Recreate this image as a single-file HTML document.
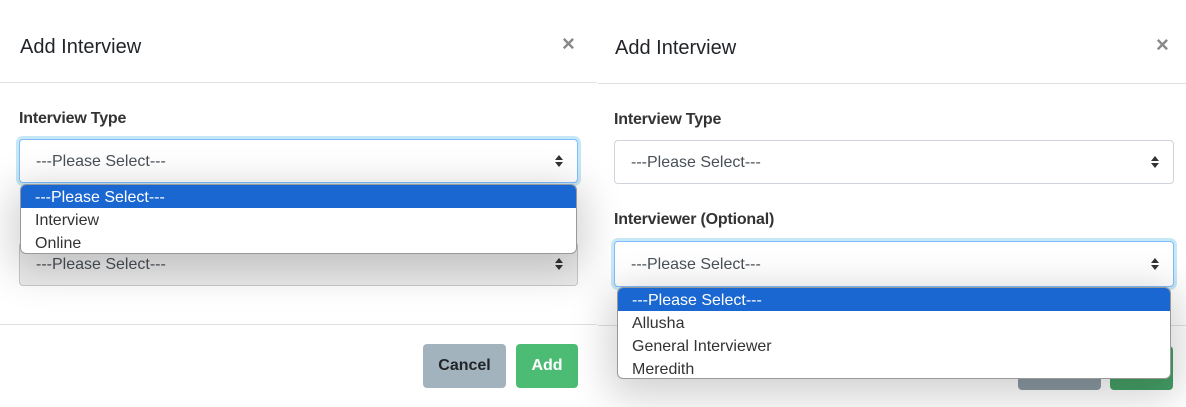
<!DOCTYPE html>
<html><head><style>
*{box-sizing:border-box;margin:0;padding:0}
body{width:1186px;height:407px;background:#fff;font-family:"Liberation Sans",sans-serif;position:relative;overflow:hidden;color:#212529}
.a{position:absolute}
.t{font-size:20px;color:#212529}
.x{font-size:22px;color:#888;font-weight:bold}
.hr{height:1px;background:#dee2e6}
.lab{font-size:16px;font-weight:bold;color:#333;letter-spacing:-0.2px}
.sel{border:1px solid #ced4da;border-radius:4px;background:#fff;font-size:16px;color:#495057;padding:2px 0 0 16px;display:flex;align-items:center}
.foc{border-color:#80bdff;box-shadow:0 0 0 3px #c6e7f5}
.arr{position:absolute;right:14px;top:50%;margin-top:-7px;width:8px;height:14px}
.dd{background:#fff;border:1px solid #999;border-radius:6px;box-shadow:0 10px 40px 8px rgba(0,0,0,.18);overflow:hidden;font-size:16px;color:#333}
.dd div{height:23px;line-height:25px;padding-left:14px}
.dd .h{background:#1a67d2;color:#fff}
.btn{border-radius:4px;font-weight:bold;font-size:16px;display:flex;align-items:center;justify-content:center}
</style></head><body>
<svg width="0" height="0" style="position:absolute"><defs><g id="ar"><path d="M0 6L4 1L8 6Z M0 8L4 13L8 8Z" fill="#333"/></g></defs></svg>

<!-- left panel -->
<div class="a t" style="left:20px;top:36px">Add Interview</div>
<div class="a x" style="left:562px;top:31px">×</div>
<div class="a hr" style="left:0;top:82px;width:597px"></div>
<div class="a lab" style="left:19px;top:110px">Interview Type</div>
<div class="a sel foc" style="left:19px;top:139px;width:559px;height:44px">---Please Select---<svg class="arr" viewBox="0 0 8 14"><use href="#ar"/></svg></div>
<div class="a sel" style="left:19px;top:242px;width:559px;height:44px;background:#ececec;border-color:#c8c8c8">---Please Select---<svg class="arr" viewBox="0 0 8 14"><use href="#ar"/></svg></div>
<div class="a hr" style="left:0;top:324px;width:597px"></div>
<div class="a btn" style="left:423px;top:344px;width:83px;height:44px;background:#a3b3bd;color:#212529">Cancel</div>
<div class="a btn" style="left:516px;top:344px;width:62px;height:44px;background:#4cbb73;color:#fff">Add</div>
<div class="a dd" style="left:20px;top:184px;width:557px;height:70px"><div class="h">---Please Select---</div><div>Interview</div><div>Online</div></div>

<!-- right panel -->
<div class="a t" style="left:615px;top:37px">Add Interview</div>
<div class="a x" style="left:1156px;top:32px">×</div>
<div class="a hr" style="left:598px;top:83px;width:588px"></div>
<div class="a lab" style="left:614px;top:111px">Interview Type</div>
<div class="a sel" style="left:614px;top:140px;width:560px;height:44px">---Please Select---<svg class="arr" viewBox="0 0 8 14"><use href="#ar"/></svg></div>
<div class="a lab" style="left:614px;top:211px">Interviewer (Optional)</div>
<div class="a sel foc" style="left:614px;top:241px;width:560px;height:46px">---Please Select---<svg class="arr" viewBox="0 0 8 14"><use href="#ar"/></svg></div>
<div class="a hr" style="left:598px;top:325px;width:588px"></div>
<div class="a btn" style="left:1018px;top:346px;width:83px;height:44px;background:#8c9aa3"></div>
<div class="a btn" style="left:1110px;top:346px;width:63px;height:44px;background:#45a066"></div>
<div class="a dd" style="left:617px;top:287px;width:554px;height:92px"><div class="h">---Please Select---</div><div>Allusha</div><div>General Interviewer</div><div>Meredith</div></div>
</body></html>
